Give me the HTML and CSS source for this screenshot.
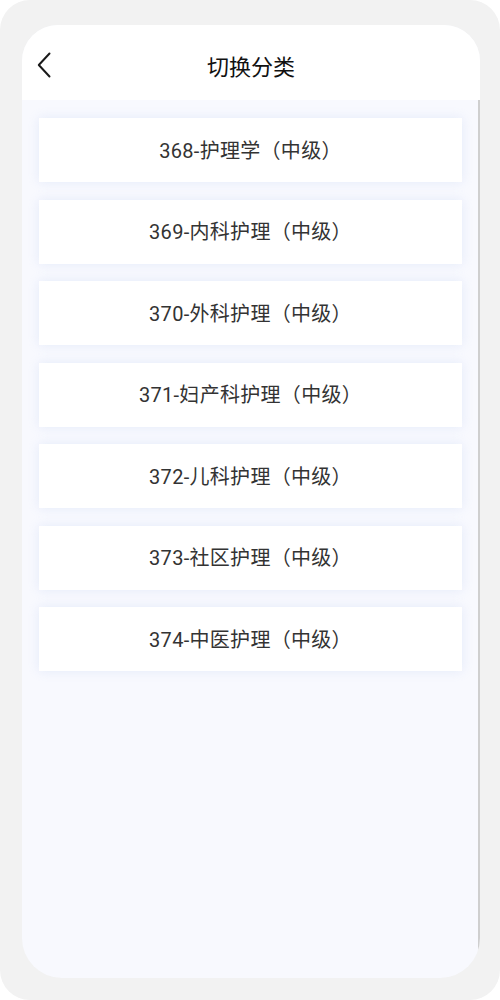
FILE: index.html
```html
<!DOCTYPE html>
<html lang="zh-CN">
<head>
    <meta charset="UTF-8">
    <meta name="viewport" content="width=device-width, initial-scale=1.0">
    <title>切换分类</title>
    <link rel="stylesheet" href="styles.css">
</head>
<body>
    <div class="frame">
        <div class="card">
            <!-- Header -->
            <div class="header">
                <a class="back" href="#">
                    <svg width="14" height="26" viewBox="0 0 14 26">
                        <path d="M12.5 1.5 L1.8 13 L12.5 24.5" fill="none" stroke="#1a1a1a" stroke-width="2" stroke-linecap="round" stroke-linejoin="round"/>
                    </svg>
                </a>
                <h1 class="title">切换分类</h1>
                <span></span>
            </div>

            <!-- Category list -->
            <div class="list">
                <div class="item">368-护理学（中级）</div>
                <div class="item">369-内科护理（中级）</div>
                <div class="item">370-外科护理（中级）</div>
                <div class="item">371-妇产科护理（中级）</div>
                <div class="item">372-儿科护理（中级）</div>
                <div class="item">373-社区护理（中级）</div>
                <div class="item">374-中医护理（中级）</div>
            </div>
        </div>
    </div>
</body>
</html>
```

FILE: styles.css
```css
body {
    margin: 0;
    background-color: #fff;
    font-family: Roboto, "Noto Sans CJK SC", sans-serif;
}
.frame {
    width: 500px;
    height: 1000px;
    box-sizing: border-box;
    padding: 25px 20px 22px 22px;
    background-color: #f2f2f2;
    border-radius: 30px;
}
.card {
    height: 100%;
    display: flex;
    flex-direction: column;
    background-color: #f8f9fe;
    border-radius: 36px 36px 40px 40px;
    overflow: hidden;
}
.header {
    height: 75px;
    flex-shrink: 0;
    display: grid;
    grid-template-columns: 60px 1fr 60px;
    align-items: center;
    background-color: #fff;
}
.back {
    display: flex;
    padding-left: 15px;
    padding-top: 4px;
}
.title {
    margin: 0;
    padding-top: 4px;
    text-align: center;
    font-size: 22px;
    font-weight: 400;
    color: #111;
}
.list {
    flex: 1;
    display: flex;
    flex-direction: column;
    gap: 17.5px;
    padding: 18px 16px 0 17px;
    border-right: 2px solid #cfcfcf;
}
.item {
    height: 64px;
    display: flex;
    align-items: center;
    justify-content: center;
    padding-bottom: 2px;
    box-sizing: border-box;
    background-color: #fff;
    box-shadow: 0 0 10px rgba(205, 218, 245, 0.45);
    font-size: 20px;
    letter-spacing: 0.3px;
    color: #333;
}
```
